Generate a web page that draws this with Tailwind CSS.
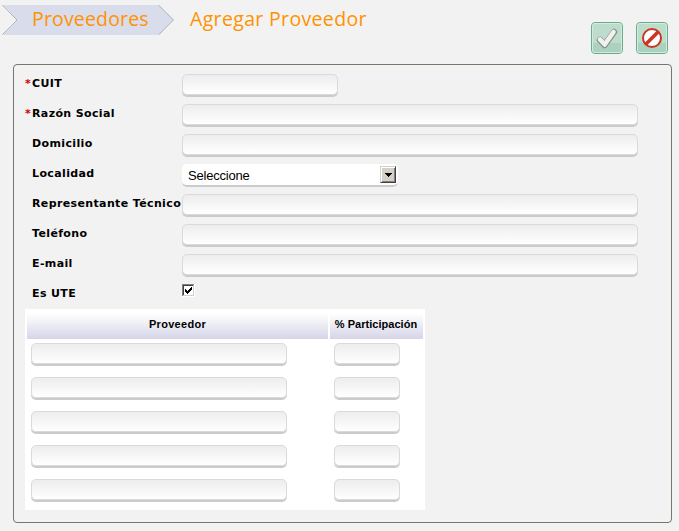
<!DOCTYPE html>
<html lang="es">
<head>
<meta charset="utf-8">
<title>Agregar Proveedor</title>
<script src="https://cdn.jsdelivr.net/npm/@tailwindcss/browser@4"></script>
</head>
<body class="h-[531px] w-[679px] overflow-hidden bg-[#f2f2f2] text-black">
<header class="flex h-16 items-start pl-[2px]">
  <nav class="grid h-[31px] w-[173px] shrink-0 mt-[5px]">
    <svg class="col-start-1 row-start-1" width="173" height="31" viewBox="0 0 173 31"><path d="M.5 0H157L171.500 15L157 30H.5L15 15Z" fill="#d9dcea"/><path d="M.5 .5L15 15L.5 29.500M157 .5L171.500 15L157 29.500" fill="none" stroke="#999" stroke-width="1" stroke-dasharray="1 .5"/></svg>
    <a class="col-start-1 row-start-1 pl-[30px] whitespace-nowrap font-['Open_Sans',sans-serif] text-[19.5px] font-medium leading-[27px] tracking-[0.17px] text-[#ff9200]">Proveedores</a>
  </nav>
  <h1 class="ml-[15px] mt-[5px] w-[200px] whitespace-nowrap font-['Open_Sans',sans-serif] text-[19.5px] font-medium leading-[27px] tracking-[0.34px] text-[#ff9200]">Agregar Proveedor</h1>
  <div class="ml-auto mr-[11px] mt-[22px] flex gap-[13px]">
    <button aria-label="Aceptar" class="size-8"><svg width="32" height="32" viewBox="0 0 32 32"><rect x=".5" y=".5" width="31" height="31" rx="3.500" fill="#bedccc" stroke="#68ad8c"/><path d="M1 21H31V28Q31 31 28 31H4Q1 31 1 28Z" fill="#acd1bf"/><rect x="1.500" y="1.500" width="29" height="29" rx="2.500" fill="none" stroke="#d3eadd"/><path d="M9 18L13.700 23L23 10" fill="none" stroke="#84938b" stroke-width="6.400" stroke-linecap="round" stroke-linejoin="round"/><path d="M9 17.500L13.700 22.500L22.500 10" fill="none" stroke="#f0f0f0" stroke-width="4.600" stroke-linecap="round" stroke-linejoin="round"/></svg></button>
    <button aria-label="Cancelar" class="size-8"><svg width="32" height="32" viewBox="0 0 32 32"><rect x=".5" y=".5" width="31" height="31" rx="3.500" fill="#bedccc" stroke="#68ad8c"/><path d="M1 21H31V28Q31 31 28 31H4Q1 31 1 28Z" fill="#acd1bf"/><rect x="1.500" y="1.500" width="29" height="29" rx="2.500" fill="none" stroke="#d3eadd"/><circle cx="16" cy="16" r="9" fill="#fff" stroke="#c93622" stroke-width="2"/><path d="M10 22L22 10" stroke="#c93622" stroke-width="3.600"/></svg></button>
  </div>
</header>
<main class="ml-[13px] h-[459px] w-[659px] rounded-[4px] border border-[#77776c] pl-[11px] pt-[9px]">
  <form>
    <div class="grid auto-rows-[30px] grid-cols-[7px_150px_456px] font-['DejaVu_Sans',sans-serif] text-[11px] font-bold leading-[20px] tracking-[0.37px] whitespace-nowrap">
      <span class="text-[#d00000]">*</span><label>CUIT</label>
      <div class="h-[21px] w-[156px] rounded-[5px] border border-[#dadada] bg-linear-to-b from-[#ededed] to-white shadow-[0_2px_#cbcbcb]"></div>
      <span class="text-[#d00000]">*</span><label>Razón Social</label>
      <div class="h-[21px] rounded-[5px] border border-[#dadada] bg-linear-to-b from-[#ededed] to-white shadow-[0_2px_#cbcbcb]"></div>
      <span></span><label>Domicilio</label>
      <div class="h-[21px] rounded-[5px] border border-[#dadada] bg-linear-to-b from-[#ededed] to-white shadow-[0_2px_#cbcbcb]"></div>
      <span></span><label>Localidad</label>
      <div class="flex h-[23px] w-[216px] items-start justify-between rounded-[5px] border-b-2 border-[#cbcbcb] bg-white pl-[6px] pr-[2px] pt-[2px] font-['Liberation_Sans',sans-serif] text-[13px] font-normal tracking-[-0.2px]">
        <span class="leading-[20px]">Seleccione</span>
        <span class="flex h-[17px] w-4 items-center justify-center border border-[#d4d0c8] border-r-[#404040] border-b-[#404040] bg-[#d4d0c8] shadow-[inset_1px_1px_#fff,inset_-1px_-1px_#808080]"><svg width="7" height="4" viewBox="0 0 7 4" shape-rendering="crispEdges"><path d="M0 0H7V1H6V2H5V3H4V4H3V3H2V2H1V1H0Z"/></svg></span>
      </div>
      <span></span><label>Representante Técnico</label>
      <div class="h-[21px] rounded-[5px] border border-[#dadada] bg-linear-to-b from-[#ededed] to-white shadow-[0_2px_#cbcbcb]"></div>
      <span></span><label>Teléfono</label>
      <div class="h-[21px] rounded-[5px] border border-[#dadada] bg-linear-to-b from-[#ededed] to-white shadow-[0_2px_#cbcbcb]"></div>
      <span></span><label>E-mail</label>
      <div class="h-[21px] rounded-[5px] border border-[#dadada] bg-linear-to-b from-[#ededed] to-white shadow-[0_2px_#cbcbcb]"></div>
      <span></span><label>Es UTE</label>
      <div><svg class="block" width="13" height="13" viewBox="0 0 13 13" shape-rendering="crispEdges"><path d="M0 0H13V13H0Z" fill="#fff"/><path d="M0 0H12V1H1V12H0Z" fill="#808080"/><path d="M1 1H11V2H2V11H1Z" fill="#404040"/><path d="M11 1H12V12H1V11H11Z" fill="#d4d0c8"/><path d="M3 5H4V6H5V7H6V6H7V5H8V4H9V3H10V6H9V7H8V8H7V9H6V10H5V9H4V8H3Z"/></svg></div>
    </div>
    <section class="-mt-[5px] h-[201px] w-[400px] bg-white px-[2px]">
      <div class="grid h-[29px] grid-cols-[301px_93px] gap-[2px] text-center font-['Liberation_Sans',sans-serif] text-[11px] font-bold leading-[30px]">
        <div class="bg-linear-to-b from-white from-15% to-[#d6d5e8] tracking-[0.3px]">Proveedor</div><div class="bg-linear-to-b from-white from-15% to-[#d6d5e8] tracking-[0.03px] -indent-px">% Participación</div>
      </div>
      <div class="grid auto-rows-[21px] grid-cols-[256px_66px] gap-x-[47px] gap-y-[13px] pl-1 pt-[5px] *:rounded-[5px] *:border *:border-[#dadada] *:bg-linear-to-b *:from-[#ededed] *:to-white *:shadow-[0_2px_#cbcbcb]">
        <div></div><div></div><div></div><div></div><div></div><div></div><div></div><div></div><div></div><div></div>
      </div>
    </section>
  </form>
</main>
</body>
</html>
